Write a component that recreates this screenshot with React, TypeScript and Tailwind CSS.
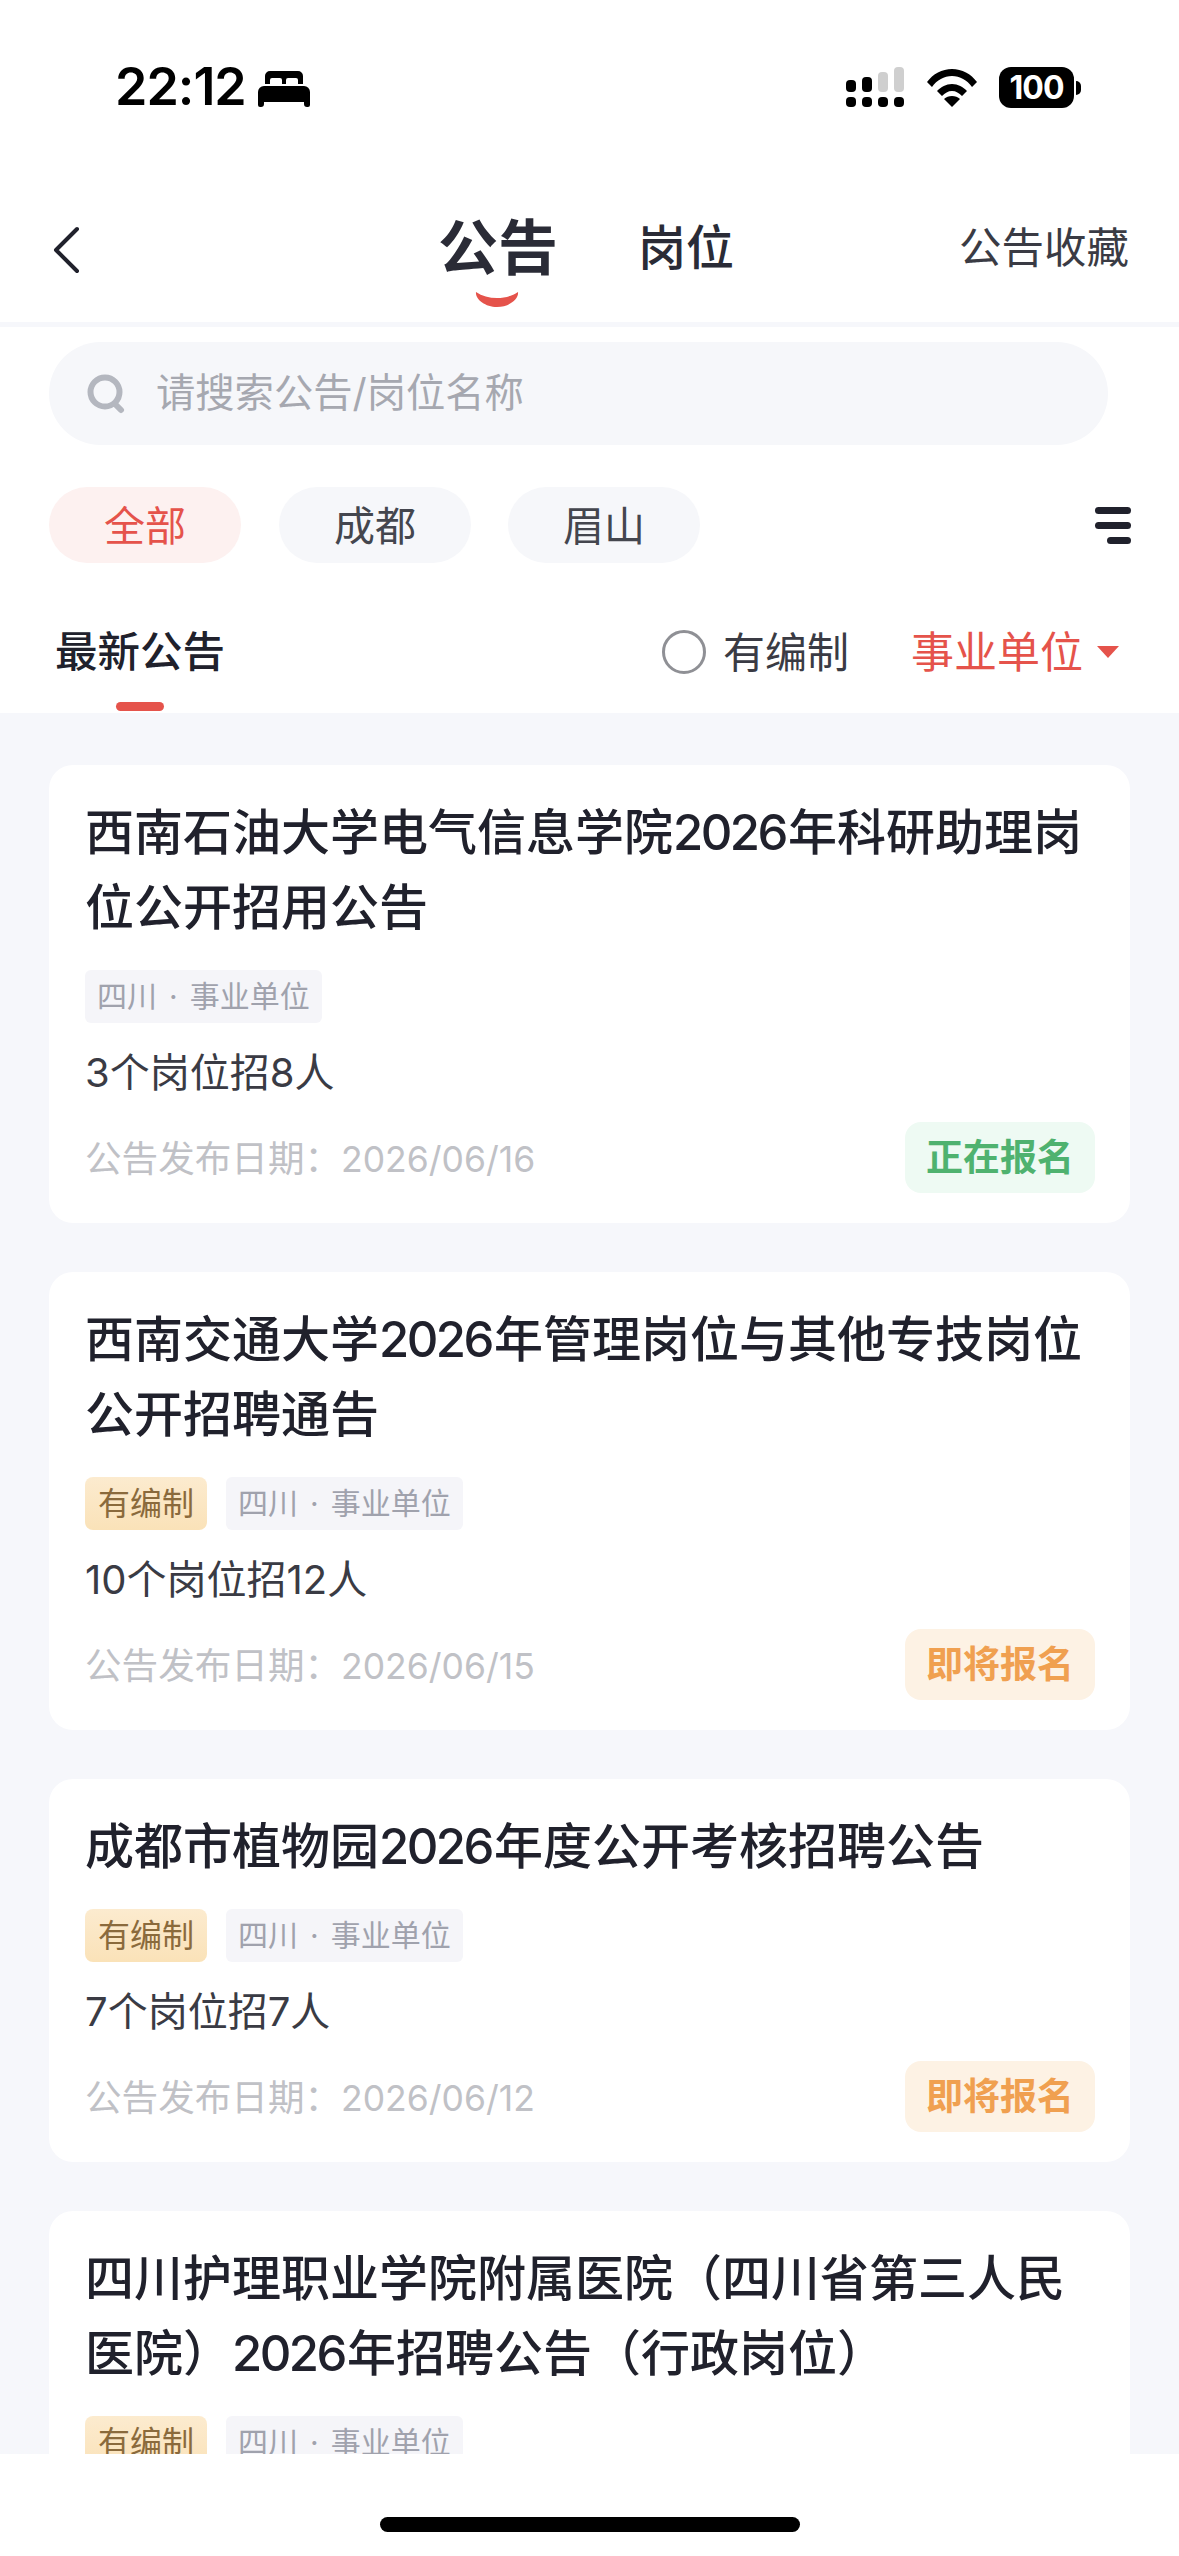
import React from 'react';

const fontStack = "font-['Inter','Noto_Sans_CJK_SC',sans-serif]";

interface Notice {
  title: string;
  hasQuota: boolean;
  count: string;
  date: string;
  status: 'open' | 'soon';
}

const notices: Notice[] = [
  { title: '西南石油大学电气信息学院2026年科研助理岗位公开招用公告', hasQuota: false, count: '3个岗位招8人', date: '2026/06/16', status: 'open' },
  { title: '西南交通大学2026年管理岗位与其他专技岗位公开招聘通告', hasQuota: true, count: '10个岗位招12人', date: '2026/06/15', status: 'soon' },
  { title: '成都市植物园2026年度公开考核招聘公告', hasQuota: true, count: '7个岗位招7人', date: '2026/06/12', status: 'soon' },
  { title: '四川护理职业学院附属医院（四川省第三人民医院）2026年招聘公告（行政岗位）', hasQuota: true, count: '5个岗位招5人', date: '2026/06/12', status: 'soon' },
];

function BedIcon() {
  return (
    <svg width="52" height="36" viewBox="0 0 52 36" fill="#000">
      <path d="M7 13V5a5 5 0 0 1 5-5h28a5 5 0 0 1 5 5v8h-5V9a2 2 0 0 0-2-2H30a2 2 0 0 0-2 2v4h-4V9a2 2 0 0 0-2-2H14a2 2 0 0 0-2 2v4z" />
      <path d="M6 15h40a6 6 0 0 1 6 6v13a2 2 0 0 1-2 2h-1a3 3 0 0 1-3-3v-2H6v2a3 3 0 0 1-3 3H2a2 2 0 0 1-2-2V21a6 6 0 0 1 6-6z" />
    </svg>
  );
}

function SignalIcon() {
  return (
    <svg width="58" height="40" viewBox="0 0 58 40">
      <rect x="0" y="13" width="10" height="12" rx="4" fill="#000" />
      <rect x="16" y="10" width="10" height="15" rx="4" fill="#000" />
      <rect x="32" y="5" width="10" height="20" rx="4" fill="#cfcfcf" />
      <rect x="48" y="0" width="10" height="25" rx="4" fill="#cfcfcf" />
      <rect x="0" y="30" width="10" height="10" rx="4" fill="#000" />
      <rect x="16" y="30" width="10" height="10" rx="4" fill="#000" />
      <rect x="32" y="30" width="10" height="10" rx="4" fill="#000" />
      <rect x="48" y="30" width="10" height="10" rx="4" fill="#000" />
    </svg>
  );
}

function WifiIcon() {
  return (
    <svg width="50" height="38" viewBox="0 0 50 38" fill="#000">
      <path d="M0 13C6 5 15 0 25 0s19 5 25 13l-5 5C40 11 33 7 25 7S10 11 5 18z" />
      <path d="M10 22c4-4 9-7 15-7s11 3 15 7l-5 5c-3-3-6-5-10-5s-7 2-10 5z" />
      <path d="M17 30c2-2 5-3 8-3s6 1 8 3l-8 8z" />
    </svg>
  );
}

function SearchIcon() {
  return (
    <svg width="40" height="40" viewBox="0 0 40 40" fill="none" stroke="#b4b7bf" strokeWidth="6" strokeLinecap="round">
      <circle cx="19" cy="18" r="14.5" />
      <path d="M29 30l6 6" />
    </svg>
  );
}

function NoticeCard({ notice }: { notice: Notice }) {
  return (
    <div className="rounded-[24px] bg-white px-[36px] pt-[30px] pb-[30px]">
      <div className="text-[49px] leading-[75px] font-medium text-[#20212c]">
        {notice.title.split(/(\d+)/).map((part, i) =>
          /\d/.test(part) ? <span key={i} className="mr-[2px] tracking-[-2.5px]">{part}</span> : part
        )}
      </div>
      <div className="mt-[25px] flex gap-[19px]">
        {notice.hasQuota && (
          <span className="flex h-[53px] items-center rounded-[8px] bg-gradient-to-b from-[#fcebcf] to-[#fae2b8] px-[13px] text-[32px] text-[#8a6a3c]">有编制</span>
        )}
        <span className="flex h-[53px] items-center rounded-[6px] bg-[#f5f5f9] px-[12px] text-[30px] text-[#a0a2ad]">
          四川<span className="mx-[12px]">·</span>事业单位
        </span>
      </div>
      <div className="mt-[22px] text-[40px] leading-[56px] text-[#3a3b44]">{notice.count}</div>
      <div className="mt-[21px] flex items-center justify-between">
        <span className="pt-[3px] text-[36.6px] text-[#c0c1c6]">
          公告发布日期：<span className="text-[35.5px]">{notice.date}</span>
        </span>
        {notice.status === 'open' ? (
          <span className="mr-[-1px] flex h-[71px] w-[190px] items-center justify-center rounded-[16px] bg-[#eefaf3] text-[37px] font-bold text-[#4fb26f]">正在报名</span>
        ) : (
          <span className="mr-[-1px] flex h-[71px] w-[190px] items-center justify-center rounded-[16px] bg-[#fdf2e4] text-[37px] font-bold text-[#f0a050]">即将报名</span>
        )}
      </div>
    </div>
  );
}

export default function App() {
  return (
    <div className={`flex h-[2556px] w-[1179px] flex-col overflow-hidden bg-[#f6f7fb] ${fontStack}`}>
      <div className="shrink-0 bg-white">
        {/* status bar */}
        <div className="flex h-[190px] items-start pt-[67px] pl-[115px] pr-[98px]">
          <span className="text-[52px] leading-[40px] font-semibold tracking-[-1px] text-black">22:12</span>
          <span className="mt-[4px] ml-[12px]"><BedIcon /></span>
          <div className="ml-auto flex items-start">
            <SignalIcon />
            <span className="mt-[2px] ml-[23px]"><WifiIcon /></span>
            <div className="ml-[22px] flex items-center">
              <div className="flex h-[41px] w-[75px] items-center justify-center rounded-[12px] bg-black text-[32px] font-bold tracking-[-1px] text-white">100</div>
              <div className="ml-[2px] h-[14px] w-[5px] rounded-r-full bg-black" />
            </div>
          </div>
        </div>
        {/* nav */}
        <div className="flex h-[132px] items-start pt-[30px] pl-[52px] pr-[50px]">
          <svg width="28" height="48" viewBox="0 0 28 48" fill="none" stroke="#20212c" strokeWidth="4" strokeLinecap="round" strokeLinejoin="round" className="mt-[6px]">
            <path d="M25 3L4 24l21 21" />
          </svg>
          <div className="relative ml-[358px] h-[60px] text-[60px] leading-[56px] font-bold text-[#2a2b36]">
            公告
            <svg width="44" height="16" viewBox="0 0 44 16" className="absolute top-[71px] left-[37px]">
              <path d="M1 1c6 4 13 6 21 6s15-2 21-6c1 7-9 15-21 15S0 8 1 1z" fill="#e5534b" />
            </svg>
          </div>
          <span className="ml-[80px] text-[48px] leading-[56px] font-medium text-[#2a2b36]">岗位</span>
          <span className="ml-auto text-[42.5px] leading-[56px] text-[#3a3b44]">公告收藏</span>
        </div>
      </div>
      <div className="h-[5px] shrink-0 bg-[#f6f7fb]" />
      <div className="shrink-0 bg-white">
        {/* search */}
        <div className="mt-[15px] ml-[49px] flex h-[103px] w-[1059px] items-center rounded-full bg-[#f6f7fa] pl-[37px]">
          <SearchIcon />
          <span className="ml-[30px] text-[39.3px] text-[#a6a8b0]">请搜索公告/岗位名称</span>
        </div>
        {/* region chips */}
        <div className="mt-[42px] flex items-center pl-[49px] pr-[48px]">
          <span className="flex h-[76px] w-[192px] items-center justify-center rounded-[38px] bg-[#fdf1f0] pt-[4px] text-[41px] text-[#e5534b]">全部</span>
          <span className="ml-[38px] flex h-[76px] w-[192px] items-center justify-center rounded-[38px] bg-[#f6f7fa] pt-[4px] text-[41px] text-[#44464e]">成都</span>
          <span className="ml-[37px] flex h-[76px] w-[192px] items-center justify-center rounded-[38px] bg-[#f6f7fa] pt-[4px] text-[41px] text-[#44464e]">眉山</span>
          <div className="ml-auto flex w-[36px] flex-col items-end gap-[8px]">
            <div className="h-[7px] w-[36px] rounded-full bg-[#20212c]" />
            <div className="h-[7px] w-[36px] rounded-full bg-[#20212c]" />
            <div className="h-[7px] w-[24px] rounded-full bg-[#20212c]" />
          </div>
        </div>
        {/* sort row */}
        <div className="mt-[58px] flex h-[62px] items-center pl-[55px] pr-[60px]">
          <span className="text-[42.5px] font-medium text-[#20212c]">最新公告</span>
          <div className="ml-auto h-[44px] w-[44px] rounded-full border-[3px] border-[#8f9095]" />
          <span className="ml-[17px] text-[42px] text-[#3a3b44]">有编制</span>
          <span className="ml-[62px] text-[43px] text-[#e5534b]">事业单位</span>
          <svg width="22" height="12" viewBox="0 0 22 12" className="ml-[14px]">
            <path d="M0 0h22L11 12z" fill="#e5534b" />
          </svg>
        </div>
        <div className="h-[30px] pt-[19px] pl-[116px]">
          <div className="h-[9px] w-[48px] rounded-full bg-[#e5534b]" />
        </div>
      </div>
      {/* list */}
      <div className="flex min-h-0 flex-1 flex-col gap-[49px] overflow-hidden px-[49px] pt-[52px]">
        {notices.map((notice) => (
          <NoticeCard key={notice.title} notice={notice} />
        ))}
      </div>
      {/* home indicator */}
      <div className="flex h-[102px] shrink-0 justify-center bg-white pt-[63px]">
        <div className="h-[15px] w-[420px] rounded-full bg-black" />
      </div>
    </div>
  );
}
